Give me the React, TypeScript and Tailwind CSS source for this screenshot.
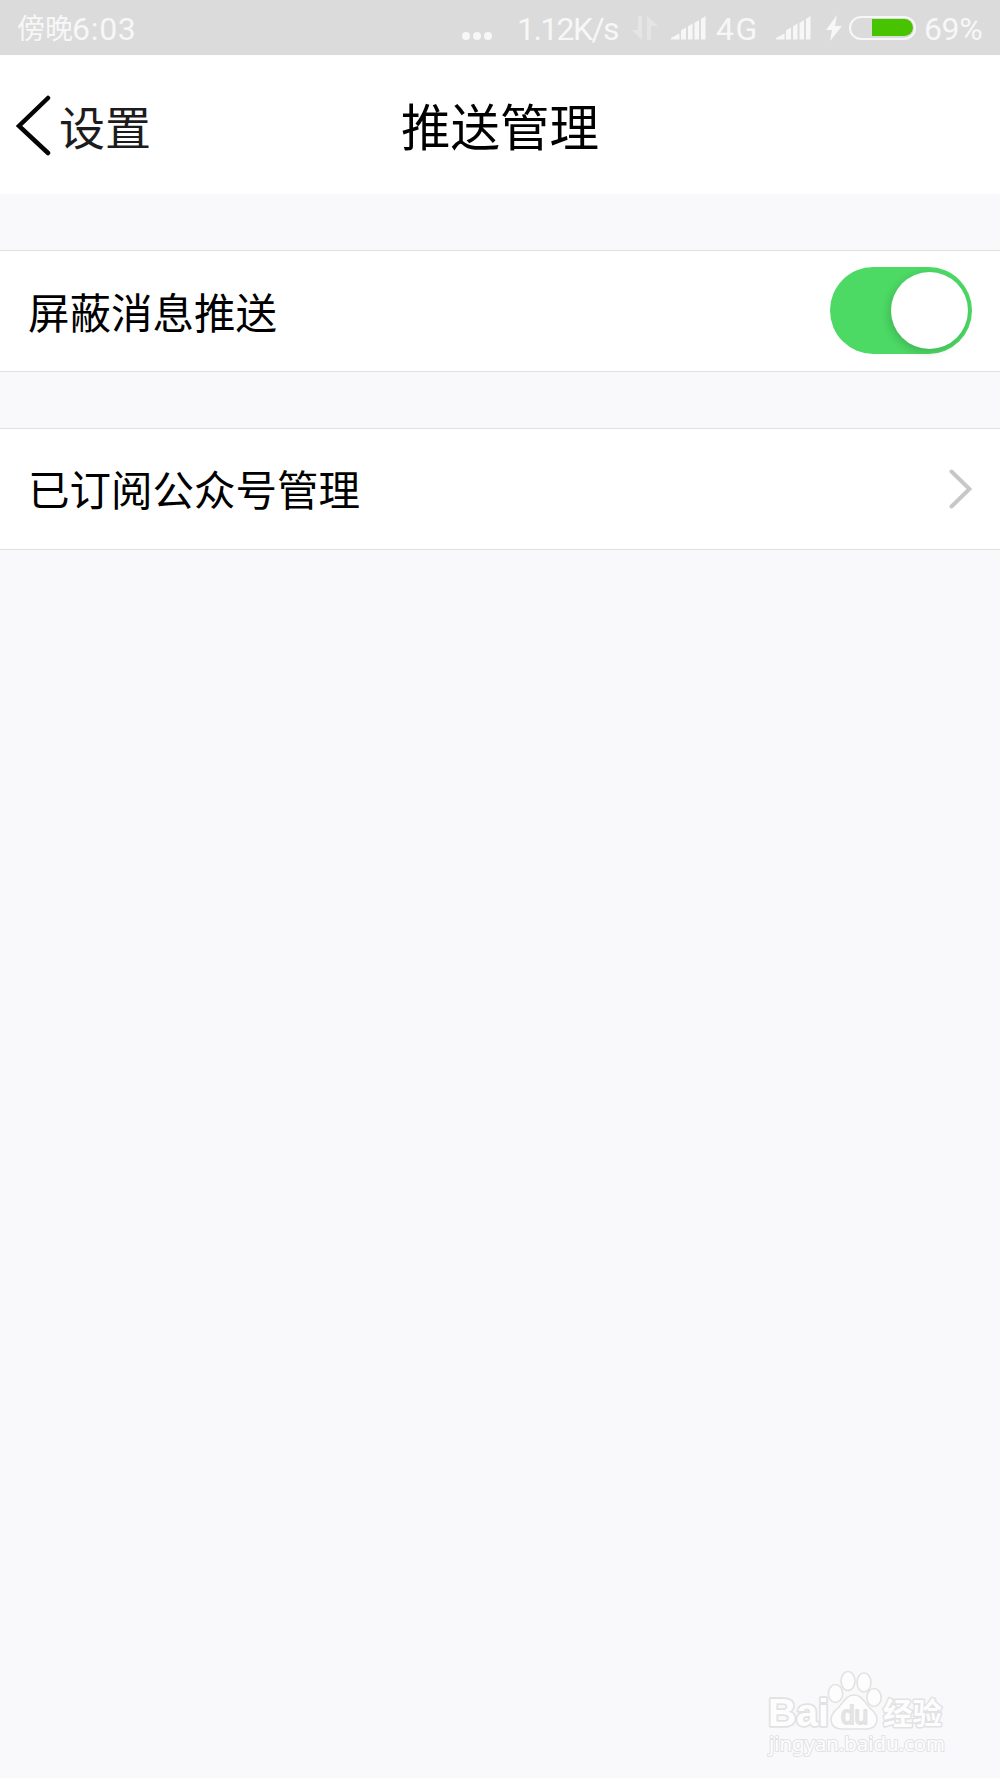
import { useState } from "react";

function SignalBars() {
  return (
    <svg width="36" height="24" viewBox="0 0 36 24" fill="#f7f7f7">
      <path d="M0 23.5v-1.5L8.5 17.5v6z" />
      <path d="M10 23.5v-9l5-3v12z" />
      <path d="M17 23.5V10.500l4.5-3v16z" />
      <path d="M23.5 23.5V7l4.5-3v19.5z" />
      <path d="M30 23.5V3l4.5-3v23.5z" />
    </svg>
  );
}

function StatusBar() {
  return (
    <div className="flex h-[55px] items-center bg-[#dbdbdb] pl-[17px] font-['Roboto','Noto_Sans_CJK_SC',sans-serif] text-[32px] leading-[55px] whitespace-nowrap text-[#f7f7f7]">
      <div className="flex w-[444px] items-center pt-[3px]">
        <span className="w-[55px] pt-px text-[28px]">傍晚</span>
        <span className="tracking-[0.7px]">6:03</span>
      </div>
      <svg width="32" height="10" viewBox="0 0 32 10" fill="#f7f7f7" className="mt-[17px]">
        <circle cx="5" cy="5" r="4" />
        <circle cx="16" cy="5" r="4" />
        <circle cx="27" cy="5" r="4" />
      </svg>
      <span className="ml-[24px] w-[115px] pt-[3px] tracking-[-1.6px]">1.12K/s</span>
      <svg width="26" height="24" viewBox="0 0 26 24" fill="#e5e5e5">
        <path d="M6 0h4v24L0 14h6z" />
        <path d="M15 0l11 10h-7v14h-4z" />
      </svg>
      <div className="ml-[13px] flex">
        <SignalBars />
      </div>
      <span className="ml-[9px] w-[60px] pt-[3px] tracking-[1.5px]">4G</span>
      <SignalBars />
      <svg width="16" height="26" viewBox="0 0 16 26" fill="#f7f7f7" className="ml-[14px]">
        <path d="M11 0L0 15h6L4 26 16 11H9z" />
      </svg>
      <div className="ml-[7px] flex h-[24px] w-[67px] justify-end rounded-full border-2 border-[#f7f7f7] p-[1.5px]">
        <div className="h-[17px] w-[41px] rounded-r-full bg-[#47c300]" />
      </div>
      <span className="ml-[8px] pt-[3px] tracking-[-0.4px]">69%</span>
    </div>
  );
}

function Header() {
  return (
    <header className="grid h-[139px] grid-cols-3 items-center bg-white">
      <button className="flex items-center pl-[16px] text-[46px] leading-none text-[#1c1c1c]">
        <svg width="36" height="62" viewBox="0 0 36 62" fill="none" stroke="#050505" strokeWidth="4.5" strokeLinecap="round">
          <path d="M32 4L3 32l29 27" />
        </svg>
        <span className="ml-[7px]">设置</span>
      </button>
      <h1 className="text-center text-[49.5px] leading-none text-black">推送管理</h1>
    </header>
  );
}

function Switch({ checked, onChange }: { checked: boolean; onChange: (v: boolean) => void }) {
  return (
    <button
      role="switch"
      aria-checked={checked}
      onClick={() => onChange(!checked)}
      className={`mb-[1px] flex h-[87px] w-[142px] items-center rounded-full px-[4.5px] ${checked ? "justify-end bg-[#4cd964]" : "justify-start bg-[#e5e5e5]"}`}
    >
      <span className="h-[77px] w-[77px] rounded-full bg-white shadow-[-2px_3px_8px_rgba(0,0,0,0.16)]" />
    </button>
  );
}

function Watermark() {
  return (
    <svg width="184" height="92" viewBox="0 0 184 92" fill="#fdfdfe" stroke="#e2e2e3" strokeWidth="1.6" strokeLinejoin="round">
      <text x="1" y="57" fontSize="39" fontFamily="Liberation Sans, sans-serif" fontWeight="700" paintOrder="stroke" strokeWidth="3.5" textLength="61" lengthAdjust="spacingAndGlyphs">Bai</text>
      <ellipse cx="68.5" cy="24.5" rx="7.2" ry="9" />
      <ellipse cx="81" cy="12" rx="7" ry="9.500" />
      <ellipse cx="97" cy="13.500" rx="7" ry="9.500" />
      <ellipse cx="107" cy="28.5" rx="7.2" ry="9" />
      <path d="M87 26c-8 0-11 8-16 13-6 5-9 10-6 16 3 6 9 5 22 5s19 1 22-5c3-6 0-11-6-16-5-5-8-13-16-13z" />
      <text x="74" y="55" fontSize="25" fontFamily="Liberation Sans, sans-serif" fill="#f4f4f6" strokeWidth="1.8" textLength="27" lengthAdjust="spacingAndGlyphs">du</text>
      <text x="116" y="55" fontSize="29.5" fontFamily="Noto Sans CJK SC, sans-serif" fontWeight="700" paintOrder="stroke" strokeWidth="3">经验</text>
      <text x="2" y="82" fontSize="19.5" fontFamily="Noto Sans, sans-serif" paintOrder="stroke" strokeWidth="2" textLength="176" lengthAdjust="spacingAndGlyphs">jingyan.baidu.com</text>
    </svg>
  );
}

export default function App() {
  const [muted, setMuted] = useState(true);

  return (
    <div className="flex h-[1778px] w-[1000px] flex-col bg-[#f9f9fb] font-['Noto_Sans_CJK_SC',sans-serif] text-black">
      <StatusBar />
      <Header />

      <main className="flex flex-col gap-[56px] pt-[56px] text-[41.5px] leading-none">
        <div className="flex h-[122px] items-center justify-between border-y border-[#dfe1e2] bg-white px-[28px]">
          <span className="pt-[2px]">屏蔽消息推送</span>
          <Switch checked={muted} onChange={setMuted} />
        </div>
        <div className="flex h-[122px] items-center justify-between border-y border-[#dfe0e2] bg-white px-[28px]">
          <span>已订阅公众号管理</span>
          <svg width="24" height="42" viewBox="0 0 24 42" fill="none" stroke="#c7c7c7" strokeWidth="4" strokeLinecap="round">
            <path d="M3.5 3.5L21.5 21l-18 17.5" />
          </svg>
        </div>
      </main>

      <footer className="mt-auto flex justify-end pr-[49px] pb-[17px]">
        <Watermark />
      </footer>
    </div>
  );
}
